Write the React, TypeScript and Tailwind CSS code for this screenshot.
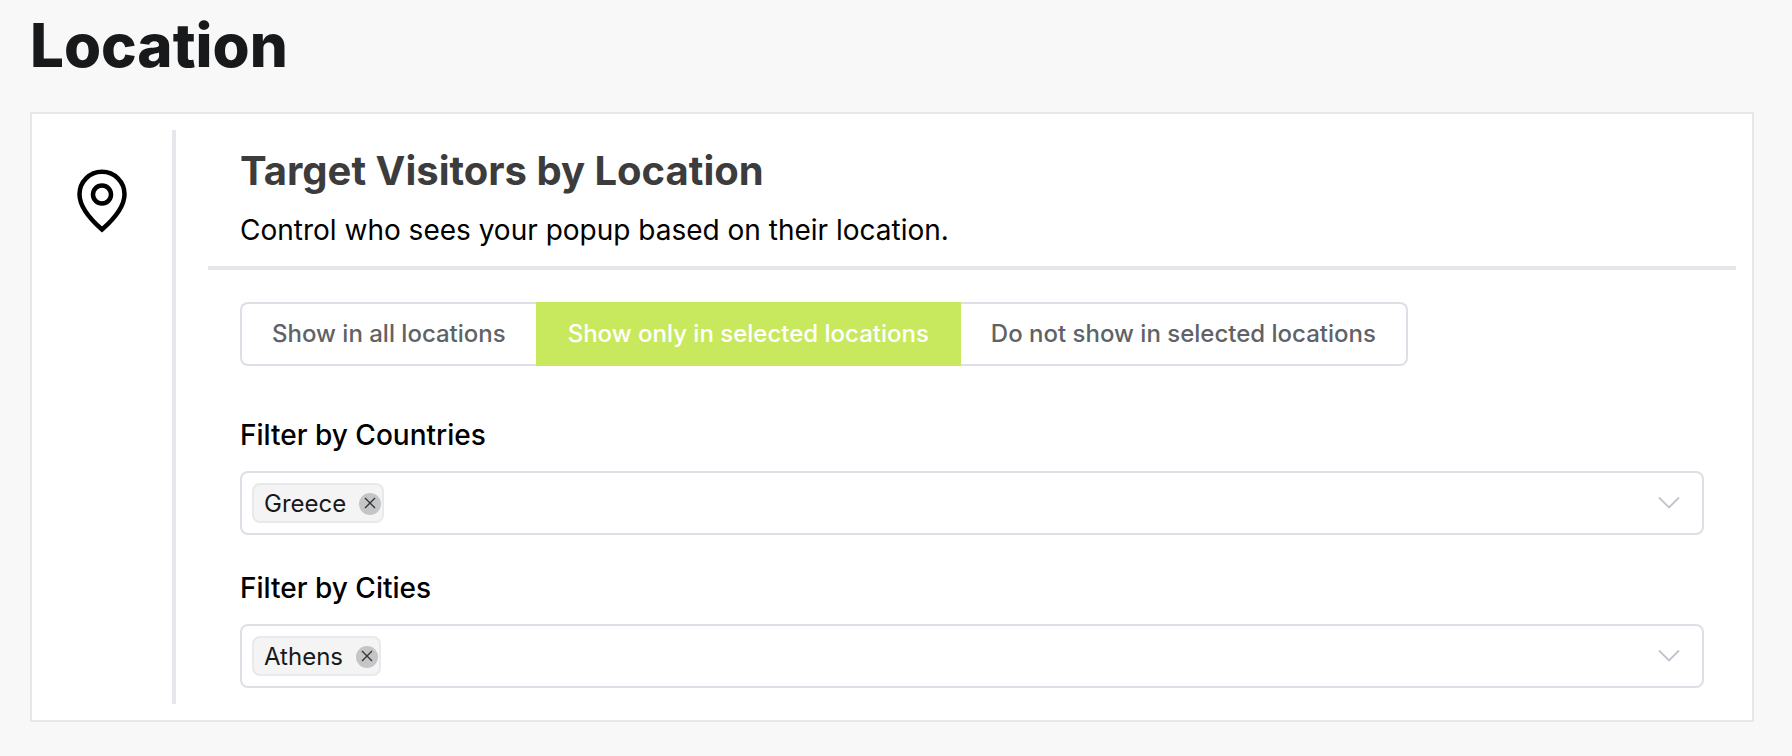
import { useState } from "react";

const modes = [
  { id: "all", label: "Show in all locations" },
  { id: "include", label: "Show only in selected locations" },
  { id: "exclude", label: "Do not show in selected locations" },
];

const countries = ["Greece", "Italy", "Spain", "Cyprus"];
const cities = ["Athens", "Rome", "Madrid", "Nicosia"];

const Tag = ({ label, onRemove }: { label: string; onRemove: () => void }) => {
  return (
    <span className="flex h-10 items-center gap-[13px] rounded-lg border-2 border-[#e9e9eb] bg-[#f4f4f4] pt-px pr-px pl-2.5 text-2xl text-[#18191b]">
      {label}
      <button
        type="button"
        aria-label={`Remove ${label}`}
        onClick={onRemove}
        className="flex size-[22px] items-center justify-center rounded-full bg-[#c4c5c7] text-[#303133]"
      >
        <svg viewBox="0 0 22 22" className="size-[22px]" fill="none" stroke="currentColor" strokeWidth="1.3">
          <path d="M6 5 16 15M16 5 6 15" />
        </svg>
      </button>
    </span>
  );
};

type FilterProps = {
  id: string;
  label: string;
  options: string[];
  initial: string[];
};

const FilterSelect = ({ id, label, options, initial }: FilterProps) => {
  const [selected, setSelected] = useState(initial);

  return (
    <div>
      <label htmlFor={id} className="mb-3.5 block text-[28px] leading-[43px] font-medium">
        {label}
      </label>
      <div className="flex h-16 items-center gap-3 rounded-lg border-2 border-[#dcdfe6] pr-[22px] pl-2.5">
        {selected.map((item) => (
          <Tag
            key={item}
            label={item}
            onRemove={() => setSelected(selected.filter((s) => s !== item))}
          />
        ))}
        <select
          id={id}
          value=""
          onChange={(e) => setSelected([...selected, e.target.value])}
          className="h-full min-w-0 flex-1 appearance-none bg-transparent text-2xl outline-none"
        >
          <option value="" />
          {options
            .filter((o) => !selected.includes(o))
            .map((o) => (
              <option key={o}>{o}</option>
            ))}
        </select>
        <svg
          viewBox="0 0 22 22"
          className="pointer-events-none size-[22px] shrink-0"
          fill="none"
          stroke="#c0c4cc"
          strokeWidth="1.8"
          strokeLinecap="round"
        >
          <path d="M1.5 6 11 15.5 20.5 6" />
        </svg>
      </div>
    </div>
  );
};

const App = () => {
  const [mode, setMode] = useState("include");

  return (
    <main className="min-h-screen bg-[#f8f8f8] pr-[38px] pb-8 pl-[30px] font-['Inter',sans-serif] text-black">
      <h1 className="pt-2 pb-[30px] text-6xl leading-[74px] font-extrabold text-[#18191b]">
        Location
      </h1>

      <section className="flex border-2 border-[#e5e7eb] bg-white p-4">
        {/* Icon column */}
        <div className="flex w-32 shrink-0 justify-center border-r-4 border-[#e5e7eb] pt-[39px]">
          <svg viewBox="0 0 52 66" className="mr-4 h-[66px] w-[52px]" fill="none" stroke="currentColor" strokeWidth="4.5">
            <path d="M26 60.5C18 53.5 3.5 39.500 3.5 25.2a22.5 22.5 0 0 1 45 0C48.5 39.500 34 53.5 26 60.5Z" />
            <circle cx="26" cy="25.5" r="9" />
          </svg>
        </div>

        <div className="ml-8 min-w-0 flex-1">
          <header className="border-b-4 border-[#e5e7eb] px-8 py-4">
            <h2 className="pb-3.5 text-[40px] leading-[50px] font-bold text-[#3c3c3c]">
              Target Visitors by Location
            </h2>
            <p className="text-[28px] leading-10">
              Control who sees your popup based on their location.
            </p>
          </header>

          <div className="px-8 pt-8 pb-4">
            {/* Mode switch */}
            <fieldset aria-label="Visibility" className="mb-12 flex h-16 w-fit">
              {modes.map((m) => (
                <label
                  key={m.id}
                  className="flex cursor-pointer items-center border-y-2 border-[#dcdfe6] px-[30px] text-2xl font-medium whitespace-nowrap text-[#606266] first-of-type:rounded-l-lg first-of-type:border-l-2 last-of-type:rounded-r-lg last-of-type:border-r-2 has-checked:border-x-2 has-checked:border-[#c8e95d] has-checked:bg-[#c8e95d] has-checked:text-white"
                >
                  <input
                    type="radio"
                    name="mode"
                    checked={mode === m.id}
                    onChange={() => setMode(m.id)}
                    className="sr-only"
                  />
                  {m.label}
                </label>
              ))}
            </fieldset>

            <div className="space-y-8">
              <FilterSelect id="countries" label="Filter by Countries" options={countries} initial={["Greece"]} />
              <FilterSelect id="cities" label="Filter by Cities" options={cities} initial={["Athens"]} />
            </div>
          </div>
        </div>
      </section>
    </main>
  );
};

export default App;
